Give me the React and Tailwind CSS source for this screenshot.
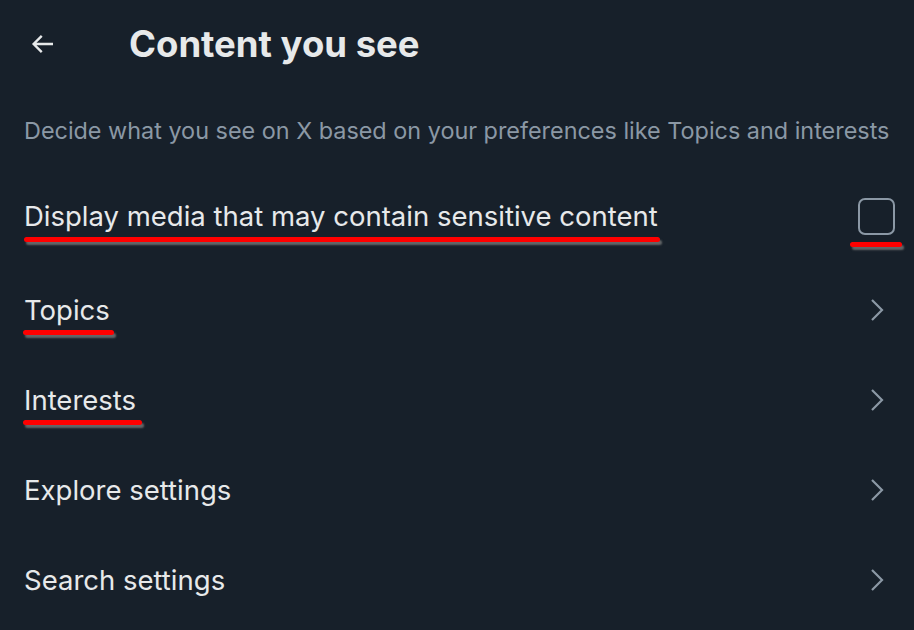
import React from 'react';

const Chevron = () => (
  <svg width="14" height="24" viewBox="0 0 14 24" className="text-[#8b98a5]">
    <path d="M2 2 L12 12 L2 22" fill="none" stroke="currentColor" strokeWidth="2.2" />
  </svg>
);

// hand-drawn red mark under a label
const Mark = ({ className }) => (
  <div className={`h-[5px] bg-[#ff0000] rounded-full shadow-[2px_3px_2px_rgba(120,120,120,0.8)] ${className}`} />
);

const rows = [
  { label: 'Topics', mark: 'w-[91px]' },
  { label: 'Interests', mark: 'w-[119px]' },
  { label: 'Explore settings' },
  { label: 'Search settings' },
];

export default function App() {
  return (
    <div className="w-[914px] h-[630px] bg-[#17202a] text-[#e7e9ea] overflow-hidden" style={{ fontFamily: 'Inter, "Noto Sans", sans-serif' }}>
      <div className="flex items-center h-[88px]">
        <div className="w-[129px] pl-[28px] flex items-center">
          <svg width="30" height="30" viewBox="0 0 24 24" className="text-[#e7e9ea]">
            <path d="M20 12H4.5M11 5.5L4.5 12l6.5 6.5" fill="none" stroke="currentColor" strokeWidth="1.9" />
          </svg>
        </div>
        <h1 className="text-[36.5px] font-bold tracking-[0px]">Content you see</h1>
      </div>

      <p className="px-6 pt-[28px] text-[23.4px] text-[#8b98a5] leading-[30px] whitespace-nowrap">
        Decide what you see on X based on your preferences like Topics and interests
      </p>

      <div className="flex items-start justify-between pl-6 pr-[12px] pt-[52px] h-[146px]">
        <div>
          <div className="text-[27.5px] leading-[36px]">Display media that may contain sensitive content</div>
          <Mark className="w-[636px] mt-[3px]" />
        </div>
        <div className="flex flex-col items-center">
          <div className="w-[37px] h-[37px] rounded-[7px] border-2 border-[#8b98a5]" />
          <Mark className="w-[52px] mt-[7px]" />
        </div>
      </div>

      {rows.map((r) => (
        <div key={r.label} className="flex items-start justify-between pl-6 pr-[30px] h-[90px]">
          <div>
            <div className="text-[27.5px] leading-[36px]">{r.label}</div>
            {r.mark && <Mark className={`${r.mark} mt-[2px] -ml-px`} />}
          </div>
          <div className="pt-[6px]"><Chevron /></div>
        </div>
      ))}
    </div>
  );
}
